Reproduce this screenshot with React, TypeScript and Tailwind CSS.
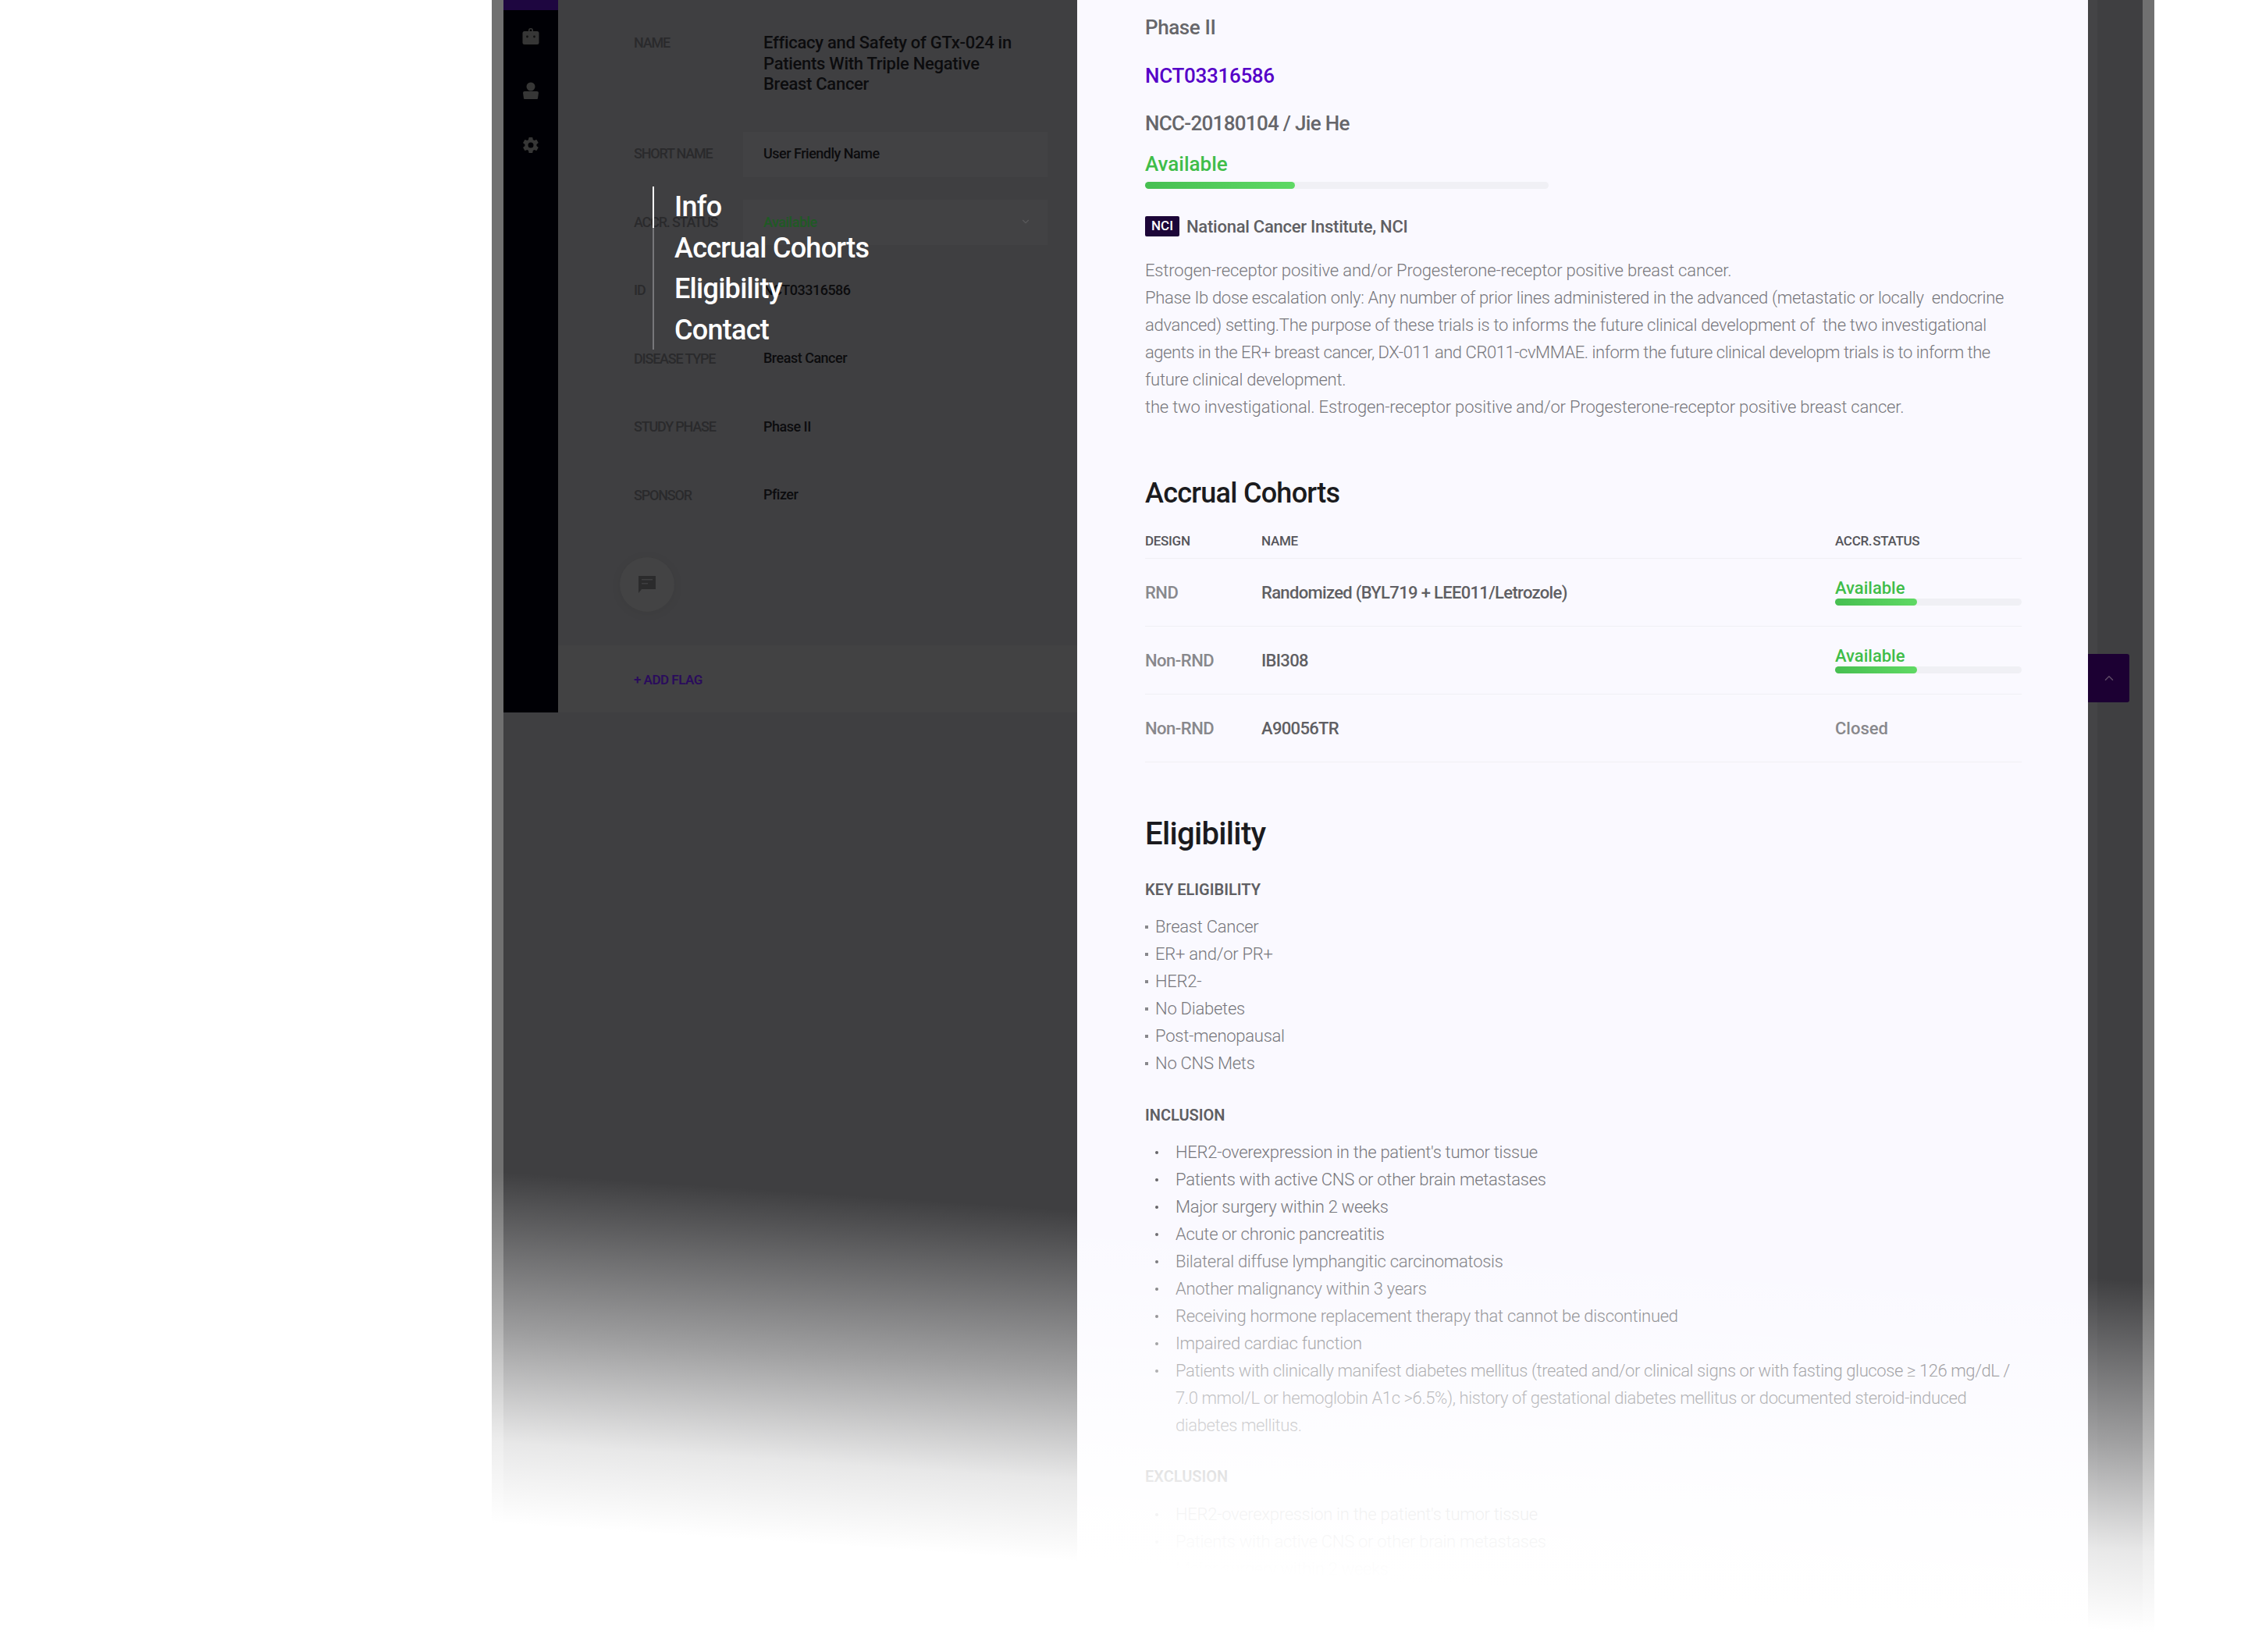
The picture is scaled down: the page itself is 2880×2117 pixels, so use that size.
import React from "react";
import { ChevronDown, ChevronUp } from "lucide-react";

// ---------- Data ----------
const formRows = [
    { label: "ID", value: "NCT03316586" },
    { label: "DISEASE TYPE", value: "Breast Cancer" },
    { label: "STUDY PHASE", value: "Phase II" },
    { label: "SPONSOR", value: "Pfizer" },
];

const summary = [
    { text: "Estrogen-receptor positive and/or Progesterone-receptor positive breast cancer.", tracking: "tracking-[-0.16px]" },
    { text: "Phase Ib dose escalation only: Any number of prior lines administered in the advanced (metastatic or locally  endocrine", tracking: "tracking-[-0.31px]" },
    { text: "advanced) setting.The purpose of these trials is to informs the future clinical development of  the two investigational", tracking: "tracking-[-0.29px]" },
    { text: "agents in the ER+ breast cancer, DX-011 and CR011-cvMMAE. inform the future clinical developm trials is to inform the", tracking: "tracking-[-0.45px]" },
    { text: "future clinical development.", tracking: "tracking-[-0.25px]" },
    { text: "the two investigational. Estrogen-receptor positive and/or Progesterone-receptor positive breast cancer.", tracking: "tracking-[-0.18px]" },
];

const cohorts = [
    { design: "RND", name: "Randomized (BYL719 + LEE011/Letrozole)", available: true },
    { design: "Non-RND", name: "IBI308", available: true },
    { design: "Non-RND", name: "A90056TR", available: false },
];

const keyEligibility = ["Breast Cancer", "ER+ and/or PR+", "HER2-", "No Diabetes", "Post-menopausal", "No CNS Mets"];

const inclusion = [
    "HER2-overexpression in the patient's tumor tissue",
    "Patients with active CNS or other brain metastases",
    "Major surgery within 2 weeks",
    "Acute or chronic pancreatitis",
    "Bilateral diffuse lymphangitic carcinomatosis",
    "Another malignancy within 3 years",
    "Receiving hormone replacement therapy that cannot be discontinued",
    "Impaired cardiac function",
];

const diabetes = [
    "Patients with clinically manifest diabetes mellitus (treated and/or clinical signs or with fasting glucose ≥ 126 mg/dL /",
    "7.0 mmol/L or hemoglobin A1c >6.5%), history of gestational diabetes mellitus or documented steroid-induced",
    "diabetes mellitus.",
];

const exclusion = [
    "HER2-overexpression in the patient's tumor tissue",
    "Patients with active CNS or other brain metastases",
    "Major surgery within 2 weeks",
    "Acute or chronic pancreatitis",
];

const navItems = ["Info", "Accrual Cohorts", "Eligibility", "Contact"];

// ---------- Icons ----------
const BagIcon = () => (
    <svg width="22" height="22" viewBox="0 0 22 22" fill="#363636">
        <path d="M8 6V4a3 3 0 0 1 6 0v2h-1.6V4a1.4 1.4 0 0 0-2.8 0v2z" />
        <rect x="0.5" y="5" width="21" height="17" rx="2.5" />
        <circle cx="6.5" cy="12" r="1.4" fill="#111" />
        <circle cx="15.5" cy="12" r="1.4" fill="#111" />
    </svg>
);

const UserIcon = () => (
    <svg width="22" height="22" viewBox="0 0 22 22" fill="#363636">
        <circle cx="11" cy="6" r="5.5" />
        <path d="M1 14a2 2 0 0 1 2-2h16a2 2 0 0 1 2 2l-1 7a1 1 0 0 1-1 1H3a1 1 0 0 1-1-1z" />
    </svg>
);

const GearIcon = () => (
    <svg width="24" height="24" viewBox="0 0 24 24" fill="#363636">
        <path d="M19.4 13c.04-.33.06-.66.06-1s-.02-.67-.06-1l2.1-1.65a.5.5 0 0 0 .12-.64l-2-3.46a.5.5 0 0 0-.61-.22l-2.49 1a7.3 7.3 0 0 0-1.73-1l-.38-2.65A.49.49 0 0 0 13.92 2h-4a.49.49 0 0 0-.49.42l-.38 2.65a7.7 7.7 0 0 0-1.73 1l-2.49-1a.49.49 0 0 0-.61.22l-2 3.46a.49.49 0 0 0 .12.64L4.44 11a7.9 7.9 0 0 0 0 2l-2.11 1.65a.5.5 0 0 0-.12.64l2 3.46c.12.22.39.3.61.22l2.49-1c.52.4 1.08.73 1.73 1l.38 2.65c.03.24.24.42.49.42h4c.25 0 .46-.18.49-.42l.38-2.65a7.3 7.3 0 0 0 1.73-1l2.49 1c.22.08.49 0 .61-.22l2-3.46a.5.5 0 0 0-.12-.64zM12 15.5a3.5 3.5 0 1 1 0-7 3.5 3.5 0 0 1 0 7z" />
    </svg>
);

const CommentIcon = () => (
    <svg width="24" height="24" viewBox="0 0 24 24" fill="#2b2b2c">
        <path d="M1 1h22v17H5l-4 5z" />
        <rect x="5" y="5" width="14" height="1.5" fill="#3f3f40" />
        <rect x="5" y="10" width="8" height="1.5" fill="#3f3f40" />
    </svg>
);

// ---------- Small parts ----------
const ProgressBar = ({ className, fill }: { className: string; fill: string }) => (
    <div className={`h-[9px] rounded-full bg-[#f0f0f5] ${className}`}>
        <div className={`h-full rounded-full bg-gradient-to-r from-[#47bf51] to-[#5fd964] ${fill}`} />
    </div>
);

const SquareBullets = ({ items }: { items: string[] }) => (
    <ul className="mt-[15.5px] text-[22px] leading-[35px] font-light tracking-[-0.25px] text-[#77777c]">
        {items.map((item) => (
            <li key={item} className="flex items-center">
                <span className="mr-[9px] h-[4px] w-[4px] bg-[#88888c]" />
                {item}
            </li>
        ))}
    </ul>
);

const DotRow = ({ lines, tight }: { lines: string[]; tight?: boolean }) => (
    <li className={`flex pl-[13px] ${tight ? "tracking-[-0.4px]" : "tracking-[-0.28px]"}`}>
        <span className="mt-[16px] mr-[22px] h-[4px] w-[4px] shrink-0 rounded-full bg-[#66666a]" />
        <div>
            {lines.map((line) => (
                <div key={line} className="whitespace-pre">
                    {line}
                </div>
            ))}
        </div>
    </li>
);

// ---------- Component ----------
const LeftPanel = () => (
    <div className="flex w-[735px] shrink-0 flex-col bg-[#3f3f41]">
        <div className="flex h-[913px]">
            <aside className="flex w-[70px] shrink-0 flex-col items-center bg-[#000005]">
                <div className="h-[13px] w-full bg-[#1e0640]" />
                <div className="mt-[22px]"><BagIcon /></div>
                <div className="mt-[48px]"><UserIcon /></div>
                <div className="mt-[47px]"><GearIcon /></div>
            </aside>

            <div className="flex flex-1 flex-col">
                <div className="flex-1 pt-[42px] pl-[97px] text-[18px] font-medium tracking-[-0.5px]">
                    <div className="flex">
                        <div className="w-[166px] text-[18px] leading-[26px] tracking-[-1.2px] text-[#2a2a2c]">NAME</div>
                        <div className="text-[22px] leading-[26.5px] tracking-[-0.28px] text-[#0c0c0e]">
                            Efficacy and Safety of GTx-024 in
                            <br />
                            Patients With Triple Negative
                            <br />
                            Breast Cancer
                        </div>
                    </div>

                    <div className="mt-[47px] flex h-[58px] items-center">
                        <div className="w-[140px] pb-[2px] text-[18px] tracking-[-1.2px] text-[#2a2a2c]">SHORT NAME</div>
                        <div className="flex h-full w-[390px] items-center bg-[#424244] pb-[3px] pl-[26px] text-[#0c0c0e]">
                            User Friendly Name
                        </div>
                    </div>

                    <div className="mt-[29.5px] flex h-[58px] items-center">
                        <div className="w-[140px] pb-[2px] text-[18px] tracking-[-1.2px] text-[#2a2a2c]">ACCR. STATUS</div>
                        <div className="flex h-full w-[390px] items-center justify-between bg-[#424244] pb-[2px] pr-[21px] pl-[26px] text-[#1f5a24]">
                            Available
                            <ChevronDown size={14} className="text-[#59595b]" />
                        </div>
                    </div>

                    {formRows.map((row) => (
                        <div key={row.label} className="mt-[29.5px] flex h-[58px] items-center">
                            <div className="w-[166px] pb-[2px] text-[18px] tracking-[-1.2px] text-[#2a2a2c]">{row.label}</div>
                            <div className="pb-[3px] text-[#0c0c0e]">{row.value}</div>
                        </div>
                    ))}

                    <div className="mt-[50px] -ml-[18px] flex h-[70px] w-[70px] items-center justify-center rounded-full bg-[#434344] shadow-[0_2px_14px_rgba(0,0,0,0.06)]">
                        <CommentIcon />
                    </div>
                </div>

                <div className="flex h-[86px] items-center bg-[#424243] pt-[3px] pl-[97px] text-[17px] font-semibold tracking-[-0.5px] text-[#2a0c5c]">
                    + ADD FLAG
                </div>
            </div>
        </div>
    </div>
);

const DetailPanel = () => (
    <div className="w-[1295px] shrink-0 bg-[#faf9ff] pt-[18px] pr-[85px] pl-[87px]">
        <div className="text-[26px] leading-[35px] font-medium tracking-[-0.4px] text-[#66666a]">Phase II</div>
        <div className="mt-[27px] text-[26px] leading-[35px] font-medium tracking-[-0.3px] text-[#5500c8]">NCT03316586</div>
        <div className="mt-[26px] text-[26px] leading-[35px] font-medium tracking-[-0.7px] text-[#66666a]">NCC-20180104 / Jie He</div>
        <div className="mt-[17px] text-[26px] leading-[35px] font-medium text-[#3fbd49]">Available</div>
        <ProgressBar className="mt-[5px] w-[517px]" fill="w-[192px]" />

        <div className="mt-[35px] flex h-[26px] items-center">
            <span className="flex h-[26px] w-[44px] items-center justify-center rounded-[2px] bg-[#1c0638] text-[17px] font-medium text-white">
                NCI
            </span>
            <span className="ml-[9px] text-[22px] font-medium tracking-[-0.25px] text-[#5f5f63]">National Cancer Institute, NCI</span>
        </div>

        <div className="mt-[26px] text-[22px] leading-[35px] font-light text-[#77777c]">
            {summary.map((line) => (
                <div key={line.text} className={`whitespace-pre ${line.tracking}`}>
                    {line.text}
                </div>
            ))}
        </div>

        <h2 className="mt-[68px] text-[36px] leading-[50px] font-medium tracking-[-0.73px] text-[#1b1b1e]">Accrual Cohorts</h2>

        <div className="mt-[21px] flex border-b border-[#f0f0f4] pb-[7px] text-[17px] leading-[30px] font-medium tracking-[-0.3px] text-[#55555a]">
            <div className="w-[149px]">DESIGN</div>
            <div className="w-[735px]">NAME</div>
            <div className="[word-spacing:-3px]">ACCR. STATUS</div>
        </div>
        {cohorts.map((row) => (
            <div key={row.name} className="flex h-[87px] items-center border-b border-[#f0f0f4] text-[22px] font-medium">
                <div className="w-[149px] tracking-[-0.5px] text-[#88888c]">{row.design}</div>
                <div className="w-[735px] tracking-[-0.67px] text-[#5f5f63]">{row.name}</div>
                {row.available ? (
                    <div className="w-[239px] pt-[1px] pb-[3px]">
                        <div className="leading-[26px] text-[#3fbd49]">Available</div>
                        <ProgressBar className="w-full" fill="w-[105px]" />
                    </div>
                ) : (
                    <div className="text-[#88888c]">Closed</div>
                )}
            </div>
        ))}

        <h2 className="mt-[67px] text-[40px] leading-[50px] font-medium tracking-[-0.67px] text-[#1b1b1e]">Eligibility</h2>

        <div className="mt-[30.5px] text-[20px] leading-[30px] font-semibold text-[#5f5f63]">KEY ELIGIBILITY</div>
        <SquareBullets items={keyEligibility} />

        <div className="mt-[34px] text-[20px] leading-[30px] font-semibold text-[#5f5f63]">INCLUSION</div>
        <ul className="mt-[15px] text-[22px] leading-[35px] font-light text-[#77777c]">
            {inclusion.map((item) => (
                <DotRow key={item} lines={[item]} />
            ))}
            <DotRow lines={diabetes} tight />
        </ul>

        <div className="mt-[32.5px] text-[20px] leading-[30px] font-semibold text-[#5f5f63]">EXCLUSION</div>
        <ul className="mt-[16px] text-[22px] leading-[35px] font-light text-[#77777c]">
            {exclusion.map((item) => (
                <DotRow key={item} lines={[item]} />
            ))}
        </ul>
    </div>
);

const App: React.FC = () => {
    return (
        <div className="relative h-[2117px] w-full overflow-hidden bg-white font-['Roboto',sans-serif]">
            <div className="flex h-full pl-[630px]">
                <div className="w-[15px] shrink-0 bg-[#707070]" />
                <LeftPanel />
                <DetailPanel />
                <div className="w-[70px] shrink-0 bg-[linear-gradient(90deg,#444446_12px,#3f3f41_12px)] pt-[838px]">
                    <button className="flex h-[62px] w-[53px] items-center justify-center rounded-r-[3px] bg-[#1c0033]">
                        <ChevronUp size={18} className="text-[#5e4a66]" />
                    </button>
                </div>
                <div className="w-[15px] shrink-0 bg-[#707070]" />
            </div>

            {/* Section nav floating above the form */}
            <nav className="absolute top-[239px] left-[836px] h-[209px] w-[300px] border-l-2 border-[#77777a] pl-[26px] text-[36px] leading-[52.5px] font-medium tracking-[-0.73px] text-white">
                <span className="absolute top-0 -left-[2px] h-[53px] w-[2px] bg-white" />
                {navItems.map((item) => (
                    <div key={item}>{item}</div>
                ))}
            </nav>

            {/* Fade to white over the bottom of the page */}
            <div className="pointer-events-none absolute inset-0 bg-[linear-gradient(183.8deg,rgba(255,255,255,0)_71.5%,rgba(255,255,255,0.5)_80.5%,rgba(255,255,255,0.88)_86.5%,rgba(255,255,255,1)_91%)]" />
        </div>
    );
};

export default App;
